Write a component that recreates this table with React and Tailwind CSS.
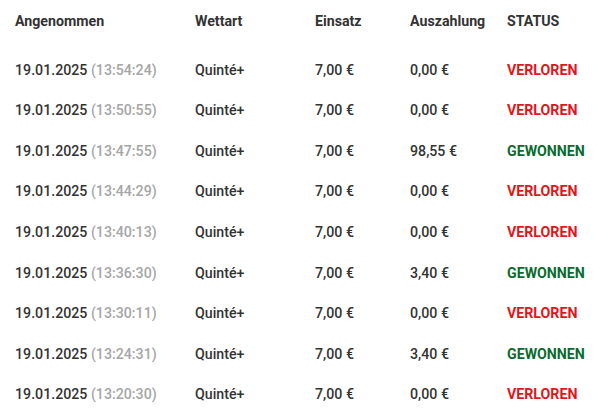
const bets = [
  { time: '13:54:24', payout: '0,00 €', won: false },
  { time: '13:50:55', payout: '0,00 €', won: false },
  { time: '13:47:55', payout: '98,55 €', won: true },
  { time: '13:44:29', payout: '0,00 €', won: false },
  { time: '13:40:13', payout: '0,00 €', won: false },
  { time: '13:36:30', payout: '3,40 €', won: true },
  { time: '13:30:11', payout: '0,00 €', won: false },
  { time: '13:24:31', payout: '3,40 €', won: true },
  { time: '13:20:30', payout: '0,00 €', won: false },
];

const cols = 'grid grid-cols-[180px_120px_95px_97px_1fr] pl-[15px]';

export default function App() {
  return (
    <div className="w-[597px] h-[417px] bg-white overflow-hidden font-['Roboto',sans-serif] text-[14.2px] font-medium text-[#333333]">
      {/* Header */}
      <div className={`${cols} h-[44px] items-center font-bold`}>
        <div>Angenommen</div>
        <div>Wettart</div>
        <div>Einsatz</div>
        <div>Auszahlung</div>
        <div>STATUS</div>
      </div>

      {/* Rows */}
      <div className="mt-[6px]">
        {bets.map((bet) => (
          <div key={bet.time} className={`${cols} h-[40.6px] items-center`}>
            <div>
              19.01.2025 <span className="text-[#a6a6a6]">({bet.time})</span>
            </div>
            <div>Quinté+</div>
            <div>7,00 €</div>
            <div>{bet.payout}</div>
            <div className={bet.won ? 'font-bold text-[#0b6b2f]' : 'font-bold text-[#e3151b]'}>
              {bet.won ? 'GEWONNEN' : 'VERLOREN'}
            </div>
          </div>
        ))}
      </div>
    </div>
  );
}
